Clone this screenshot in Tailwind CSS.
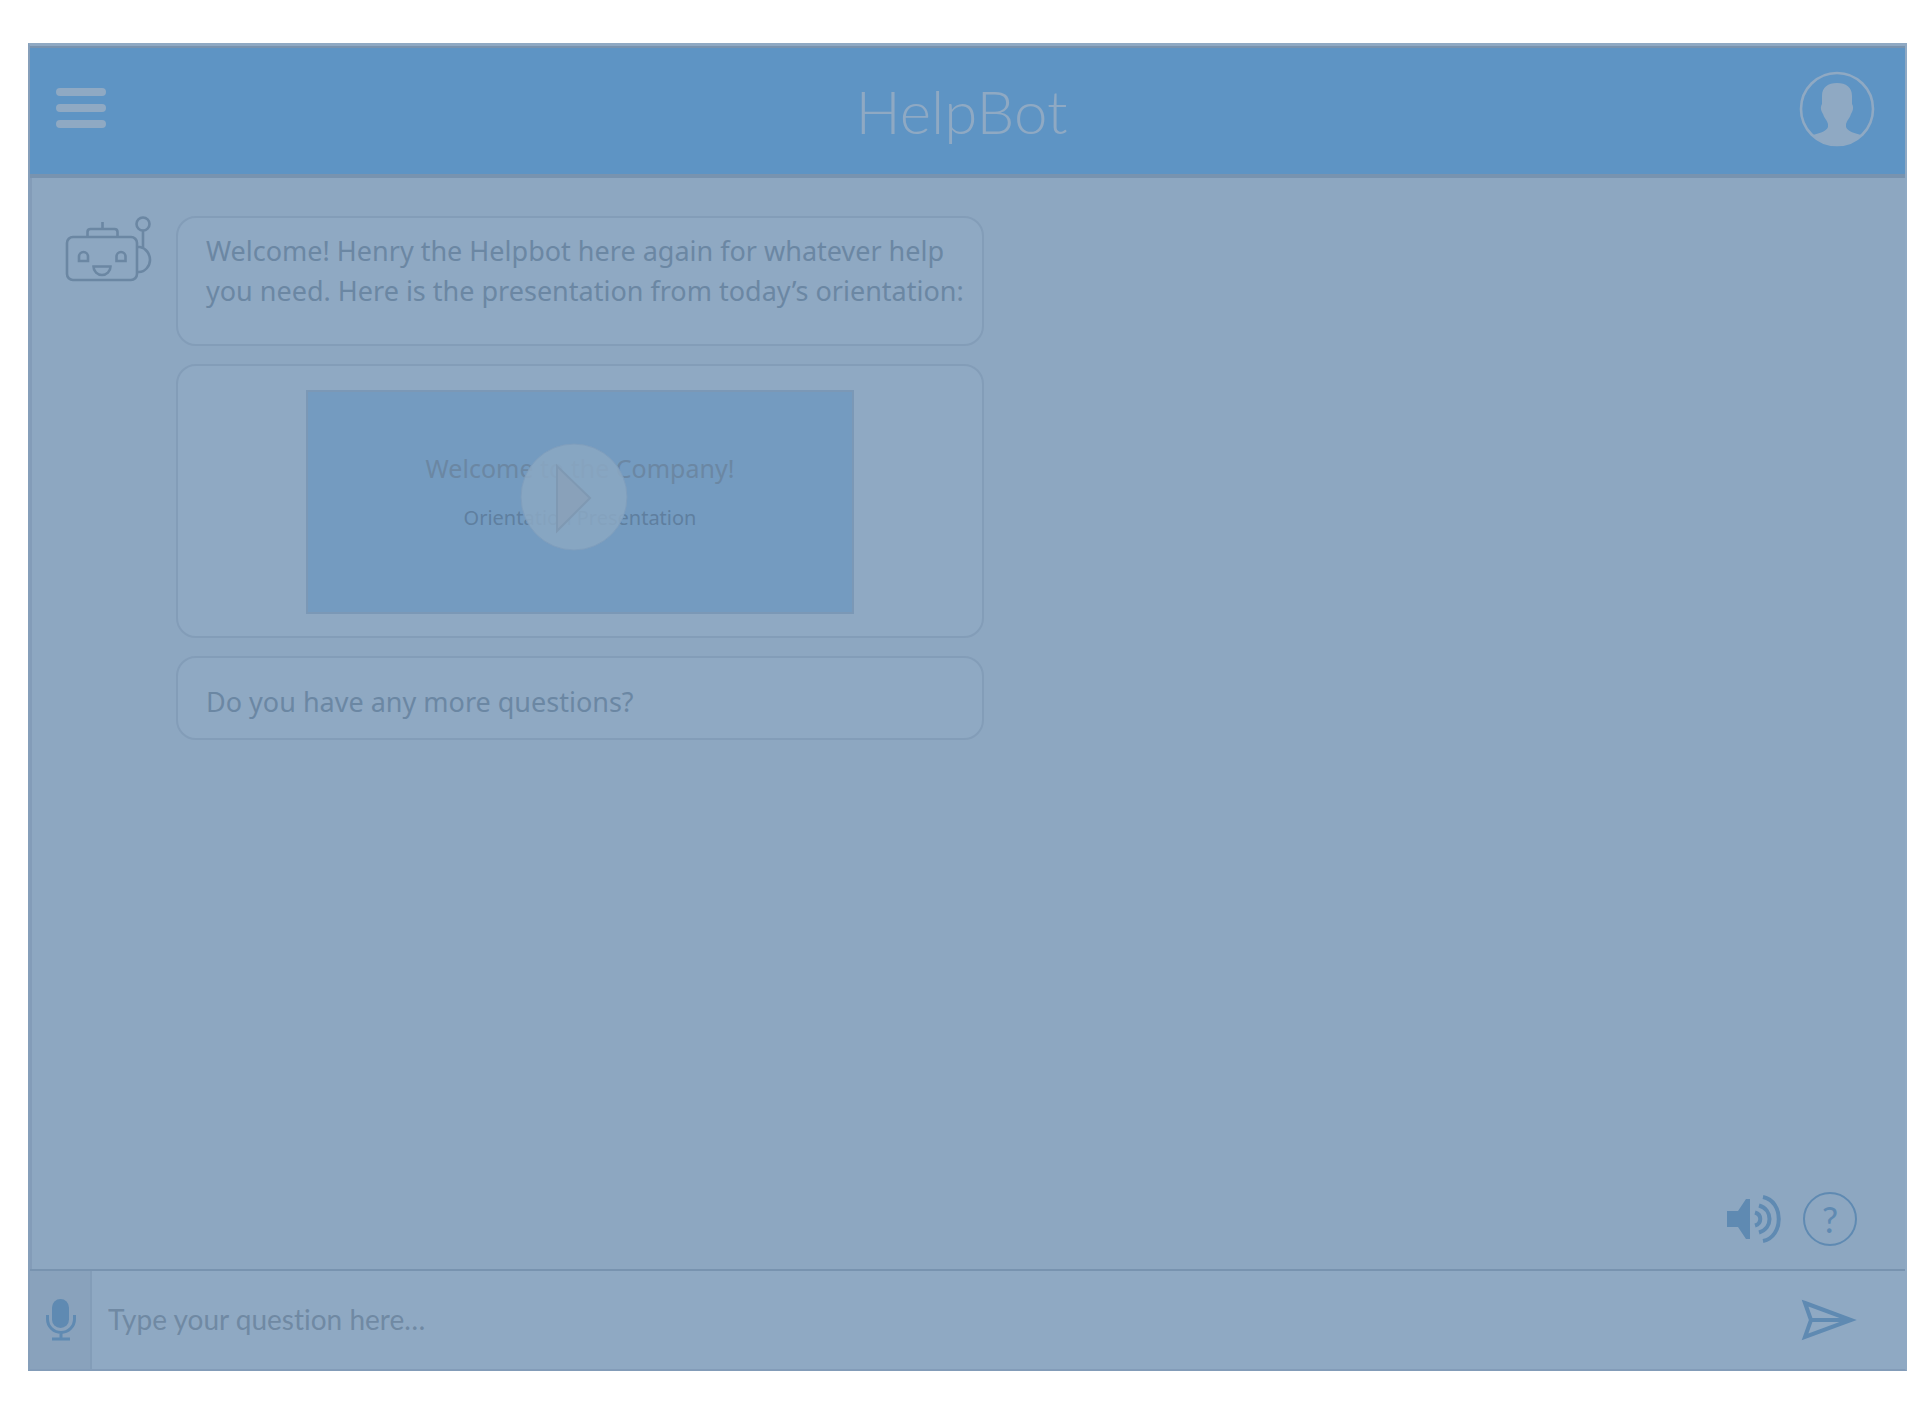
<!DOCTYPE html>
<html lang="en">
<head>
<meta charset="utf-8">
<meta name="viewport" content="width=device-width, initial-scale=1">
<title>HelpBot</title>
<script src="https://cdn.jsdelivr.net/npm/@tailwindcss/browser@4"></script>
</head>
<body class="flex min-h-screen flex-col bg-white pt-[43px] pr-6 pb-[43px] pl-7 font-['Noto_Sans',sans-serif] text-[#6b87a3]">
  <div class="flex flex-1 flex-col border-t-3 border-r-2 border-b-2 border-l-2 border-t-[#8fa9c3] border-r-[#8fa9c3] border-b-[#839cb8] border-l-[#869fba]">
    <header class="grid grid-cols-[1fr_auto_1fr] items-center border-t-2 border-b-4 border-[#7893af] bg-[#5e94c4] pr-[30px] pl-[26px] text-[#8fa9c3]">
      <button type="button" aria-label="Menu" class="mb-1.5 flex w-[50px] flex-col gap-2">
        <span class="h-2 rounded-full bg-[#8fa9c3]"></span>
        <span class="h-2 rounded-full bg-[#8fa9c3]"></span>
        <span class="h-2 rounded-full bg-[#8fa9c3]"></span>
      </button>
      <h1 class="py-7 pr-2 font-['Lato',sans-serif] text-[60px] leading-[70px] font-light">HelpBot</h1>
      <button type="button" aria-label="Profile" class="mb-1 justify-self-end">
        <svg class="size-[76px]" viewBox="0 0 76 76" fill="none">
          <circle cx="38" cy="38" r="36" stroke="#8fa9c3" stroke-width="2.6"/>
          <path d="M38 12c-9 0-15 4-15 13v8c-2 3-1 7 1 10 1 4 4 6 5 10v3c-2 5-9 6-16 8.500A36 36 0 0 0 38 74a36 36 0 0 0 25-9.500c-7-2.500-14-3.500-16-8.500v-3c1-4 4-6 5-10 2-3 3-7 1-10v-8c0-9-6-13-15-13z" fill="#8fa9c3"/>
        </svg>
      </button>
    </header>

    <main class="flex flex-1 flex-col justify-between border-l-2 border-[#839cb8] bg-[#8da7c1] pr-12 pb-[22px] pl-8">
      <section class="flex gap-6 pt-[38px]">
        <svg class="h-[68px] w-[88px] shrink-0" viewBox="0 0 88 68" fill="none" stroke="#6b87a3" stroke-width="2.600" aria-label="Henry the Helpbot" role="img">
          <rect x="3" y="21" width="70" height="43" rx="6"/>
          <path d="M23.500 21v-5q0-3 3-3h24q3 0 3 3v5M38.500 13V6"/>
          <circle cx="79" cy="8" r="6.500"/>
          <path d="M79 15v16M73 31h3c6 1 10 7 10 13s-5 12-11 12h-2"/>
          <path d="M15 45v-4.500a4.500 4.500 0 0 1 9 0V45zM52.500 45v-4.500a4.500 4.500 0 0 1 9 0V45zM29.500 50.500h17c0 5-4 8.500-8.500 8.500s-8.500-3.500-8.500-8.500z"/>
        </svg>
        <div class="flex w-full max-w-[808px] flex-col gap-[18px] text-[27px] leading-10">
          <p class="rounded-[20px] border-2 border-[#839db8] bg-[#8fa9c3] pt-[13px] pr-3 pb-[33px] pl-7">Welcome! Henry the Helpbot here again for whatever help you need. Here is the presentation from today’s orientation:</p>
          <div class="flex justify-center rounded-[20px] border-2 border-[#839db8] bg-[#8fa9c3] pt-6 pb-[22px]">
            <div class="relative flex h-[224px] w-[548px] flex-col items-center border-2 border-[#7b98b6] bg-[#749bc0] pt-[51px]">
              <h2 class="text-[25px] leading-[50px]">Welcome to the Company!</h2>
              <p class="text-[20px] leading-[50px] text-[#5f7f9f]">Orientation Presentation</p>
              <button type="button" aria-label="Play presentation" class="absolute top-[51px] left-[212px] size-[108px]">
                <svg class="size-full" viewBox="0 0 108 108">
                  <circle cx="54" cy="54" r="53" fill="#8ba8c3" fill-opacity=".86" stroke="#7f9ebd"/>
                  <path d="M37 23v65l33-33z" fill="#89a1ba" stroke="#7f99b3" stroke-width="2"/>
                </svg>
              </button>
            </div>
          </div>
          <p class="rounded-[20px] border-2 border-[#839db8] bg-[#8fa9c3] px-7 pt-6 pb-4">Do you have any more questions?</p>
        </div>
      </section>
      <div class="flex items-center justify-end gap-[22px] text-[#5f8ab2]">
        <button type="button" aria-label="Sound">
          <svg class="h-14 w-[54px]" viewBox="0 0 54 56" fill="none" stroke="currentColor" stroke-width="4">
            <path d="M0 20h11L19 8h4v40h-4L11 36H0z" fill="currentColor" stroke="none"/>
            <path d="M28 21.500c7 2 7 11 0 13M32 14.500c14 4 14 23 0 27M36 6c21 4 21 40 0 44"/>
          </svg>
        </button>
        <button type="button" aria-label="Help" class="flex size-[54px] items-center justify-center rounded-full border-2 border-current font-['Lato',sans-serif] text-[36px] leading-none">?</button>
      </div>
    </main>

    <form class="flex border-t-2 border-[#7893af] bg-[#8fa9c3] text-[#5f8ab2]">
      <button type="button" aria-label="Voice input" class="flex w-[62px] items-center border-r-2 border-[#839db8] bg-[#89a2bc] pl-4">
        <svg class="h-[42px] w-[30px]" viewBox="0 0 30 42" fill="none" stroke="currentColor" stroke-width="3">
          <rect x="6" y="0" width="17" height="29" rx="8.500" fill="currentColor" stroke="none"/>
          <path d="M1.500 16v4a13 13 0 0 0 27 0v-4M15 33v7M6 40h18"/>
        </svg>
      </button>
      <input type="text" aria-label="Your question" placeholder="Type your question here…" class="min-w-0 flex-1 px-4 pt-7 pb-[30px] font-['Lato',sans-serif] text-[28px] leading-10 outline-none [font-variant-ligatures:none] placeholder:text-[#7089a3]">
      <button type="submit" aria-label="Send" class="pr-12 pl-4">
        <svg class="h-[42px] w-[56px]" viewBox="0 0 56 42" fill="none" stroke="currentColor" stroke-width="4">
          <path d="M4 4l46 17L4 38l6-17zM10 21h40"/>
        </svg>
      </button>
    </form>
  </div>
</body>
</html>
